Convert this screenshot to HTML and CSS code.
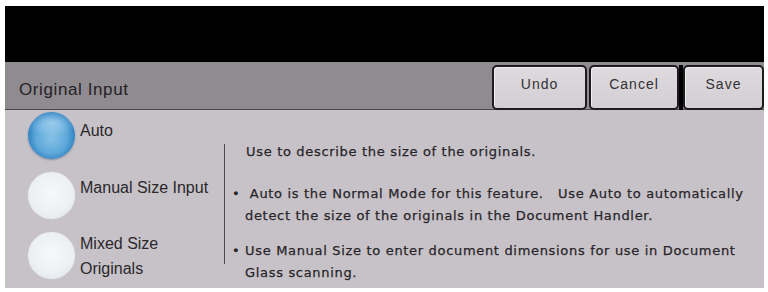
FILE: index.html
```html
<!DOCTYPE html>
<html>
<head>
<meta charset="utf-8">
<link rel="stylesheet" href="styles.css">
</head>
<body>
<div class="panel">
  <div class="topbar"></div>
  <div class="header">
    <div class="title">Original Input</div>
    <div class="buttons">
      <div class="btn btn-undo">Undo</div>
      <div class="btn btn-cancel">Cancel</div>
      <div class="sep"></div>
      <div class="btn btn-save">Save</div>
    </div>
  </div>
  <div class="content">
    <div class="options">
      <div class="opt opt-auto">
        <div class="radio radio-on"></div>
        <div class="label">Auto</div>
      </div>
      <div class="opt opt-manual">
        <div class="radio"></div>
        <div class="label">Manual Size Input</div>
      </div>
      <div class="opt opt-mixed">
        <div class="radio"></div>
        <div class="label">Mixed Size<br>Originals</div>
      </div>
    </div>
    <div class="divider"></div>
    <div class="desc">
      <p class="intro">Use to describe the size of the originals.</p>
      <div class="bullet bullet-1">
        <span class="dot">•</span>
        <span class="btext">&nbsp;Auto is the Normal Mode for this feature.&nbsp;&nbsp; Use Auto to automatically<br>detect the size of the originals in the Document Handler.</span>
      </div>
      <div class="bullet">
        <span class="dot">•</span>
        <span class="btext">Use Manual Size to enter document dimensions for use in Document<br>Glass scanning.</span>
      </div>
    </div>
  </div>
</div>
</body>
</html>
```
FILE: styles.css
```css
html, body {
  margin: 0;
  padding: 0;
  background: #ffffff;
}

.panel {
  margin: 6px 0 0 5px;
  width: 759px;
  display: flex;
  flex-direction: column;
  font-family: "Liberation Sans", Arial, sans-serif;
}

.topbar {
  height: 56px;
  background: #000000;
}

.header {
  height: 47px;
  background: #8f8b90;
  border-bottom: 1px solid #4a474b;
  display: flex;
  align-items: flex-start;
}

.title {
  padding: 18px 0 0 14px;
  font-size: 17px;
  line-height: 20px;
  letter-spacing: 0.6px;
  color: #242225;
}

.buttons {
  margin-left: auto;
  display: flex;
  padding-top: 3px;
  height: 45px;
}

.btn {
  box-sizing: border-box;
  height: 45px;
  border: 2px solid #1c1b1d;
  border-radius: 5px;
  background: linear-gradient(#dedade, #d2ced3);
  box-shadow: inset 1px 1px 0 #f2eff2;
  font-size: 14px;
  line-height: 18px;
  letter-spacing: 1px;
  color: #333134;
  text-align: center;
  padding-top: 8px;
}

.btn-undo { width: 95px; }
.btn-cancel { width: 90px; margin-left: 2px; }
.btn-save { width: 81px; }

.sep {
  width: 4px;
  background: #000000;
}

.content {
  height: 178px;
  background: #c7c2c8;
  display: flex;
  align-items: flex-start;
}

.options {
  width: 196px;
  padding: 2px 0 0 23px;
  display: flex;
  flex-direction: column;
}

.opt {
  height: 60px;
  display: flex;
  align-items: flex-start;
  gap: 5px;
}

.radio {
  flex: none;
  width: 47px;
  height: 47px;
  border-radius: 50%;
  background: radial-gradient(circle at 50% 45%, #f6f8fa 0%, #edf1f4 55%, #e0e6eb 85%, #d2d8de 100%);
  box-shadow: 0 0 1px rgba(255, 255, 255, 0.6);
}

.radio-on {
  background:
    radial-gradient(ellipse 60% 30% at 50% 22%, rgba(200, 232, 250, 0.55) 0%, rgba(200, 232, 250, 0) 100%),
    radial-gradient(circle at 50% 55%, #86c2e6 0%, #5ea8da 45%, #2c80c2 70%, #17558f 100%);
  box-shadow: 0 1px 2px rgba(20, 40, 80, 0.35);
}

.label {
  font-size: 16px;
  line-height: 25px;
  color: #2a282b;
  padding-top: 3px;
}

.opt-auto .label { padding-top: 6px; }
.opt-mixed .label { padding-top: 0; margin-top: -1px; }

.divider {
  flex: none;
  width: 1px;
  height: 120px;
  margin-top: 34px;
  background: #4e4b50;
}

.desc {
  margin-left: 7px;
  padding-top: 31px;
  font-family: "DejaVu Sans", sans-serif;
  font-size: 13px;
  line-height: 22px;
  letter-spacing: 0.68px;
  color: #272528;
  -webkit-text-stroke: 0.25px #272528;
  white-space: nowrap;
}

.intro {
  margin: 0 0 20px 0;
  padding-left: 14px;
}

.bullet {
  display: flex;
}

.bullet-1 {
  margin-bottom: 13px;
}

.dot {
  width: 13px;
  flex: none;
}
```
